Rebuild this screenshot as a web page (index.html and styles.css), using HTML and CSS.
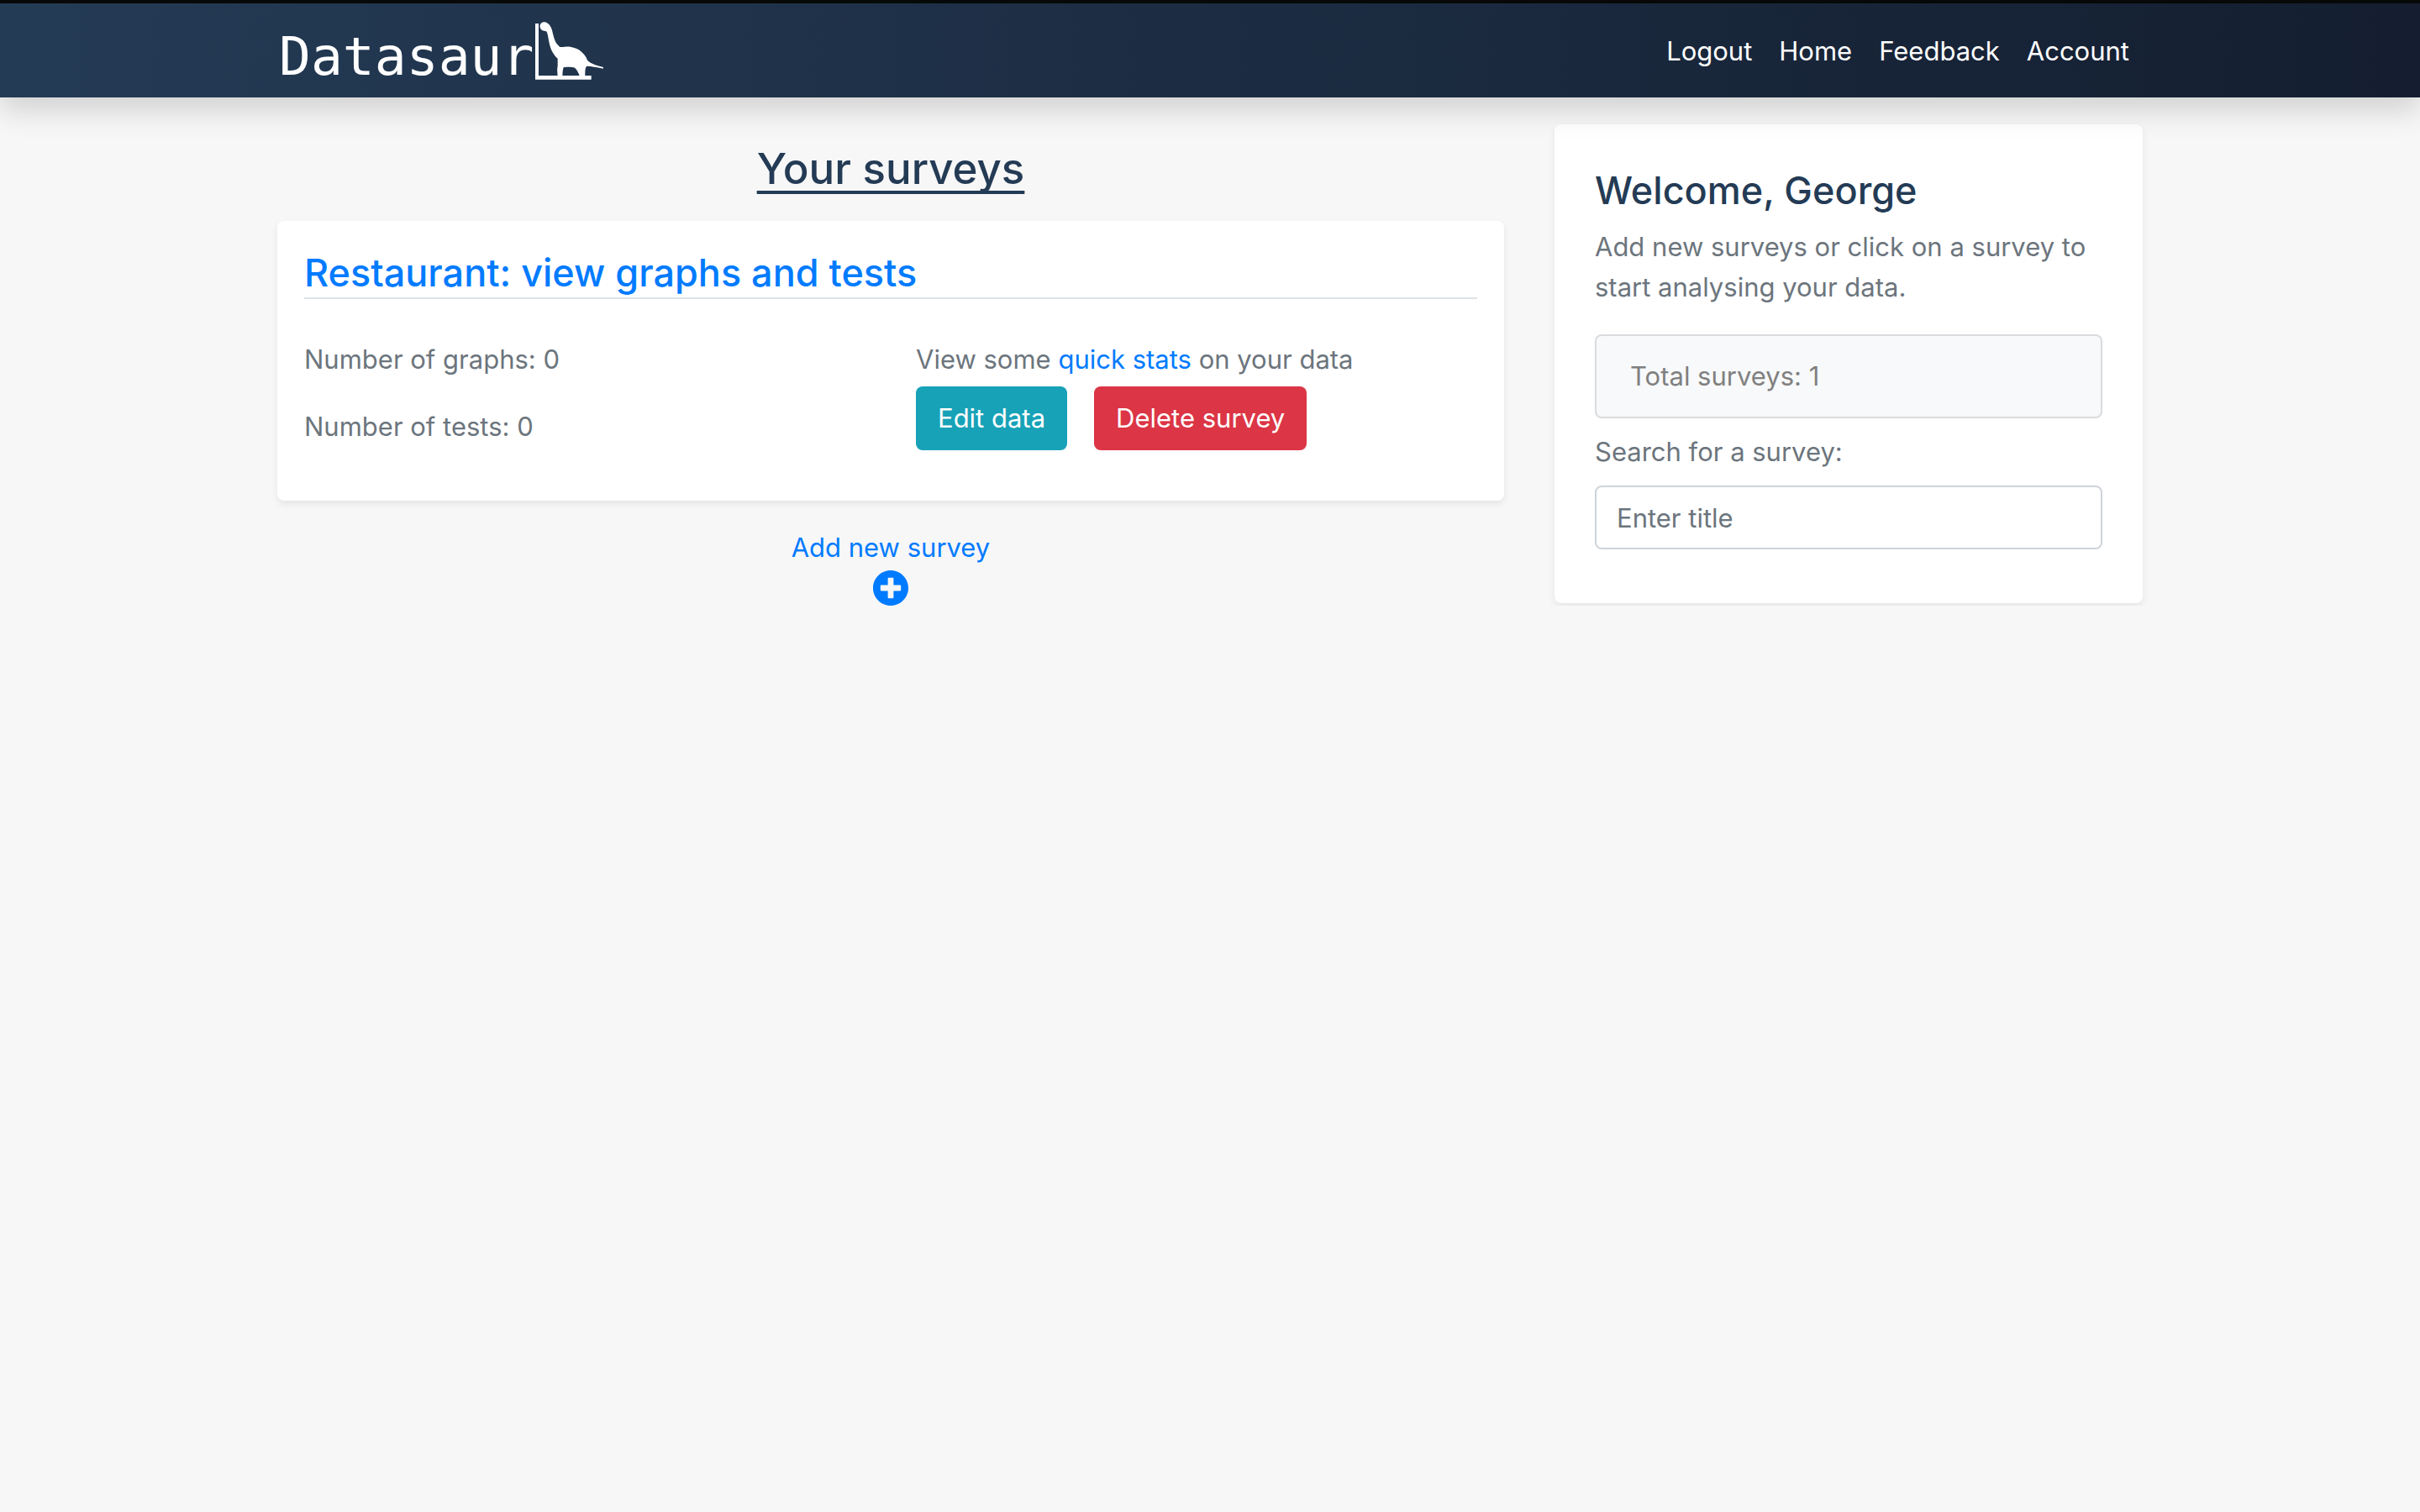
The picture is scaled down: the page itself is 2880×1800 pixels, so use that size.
FILE: index.html
```html
<!DOCTYPE html>
<html lang="en">
<head>
<meta charset="utf-8">
<meta name="viewport" content="width=device-width, initial-scale=1">
<title>Datasaur</title>
<link rel="stylesheet" href="styles.css">
</head>
<body>
<header class="navbar">
  <div class="navbar-inner">
    <a class="brand" href="#">
      <span class="brand-name">Datasaur</span>
      <svg class="brand-mark" viewBox="51 45 246 210" aria-hidden="true">
        <path d="M51 54H63V240H251V254H51Z"/>
        <path d="M68 67C66 55 75 47 86 49C98 52 107 63 111 78C116 98 120 120 133 132C138 138 142 139 148 138C172 133 200 140 216 155C226 164 233 172 236 183C242 193 262 203 294 210L293 215C270 210 250 206 236 206C229 210 229 222 229 240Q220 245 210 243C206 230 199 218 192 212C184 209 160 208 152 211C148 222 149 232 148 242Q140 246 131 242C130 226 128 216 131 206V179C115 165 106 145 102 128C98 112 97 95 92 83C87 79 71 83 68 67Z"/>
      </svg>
    </a>
    <nav class="nav-links">
      <a href="#">Logout</a>
      <a href="#">Home</a>
      <a href="#">Feedback</a>
      <a href="#">Account</a>
    </nav>
  </div>
</header>
<main class="container">
  <section class="surveys">
    <h1 class="page-title">Your surveys</h1>
    <article class="card survey">
      <h2 class="survey-title"><a href="#">Restaurant: view graphs and tests</a></h2>
      <div class="survey-body">
        <div class="counts">
          <p>Number of graphs: 0</p>
          <p>Number of tests: 0</p>
        </div>
        <div>
          <p>View some <a href="#">quick stats</a> on your data</p>
          <div class="actions">
            <button class="btn btn-info" type="button">Edit data</button>
            <button class="btn btn-danger" type="button">Delete survey</button>
          </div>
        </div>
      </div>
    </article>
    <a class="add-survey" href="#">
      <span>Add new survey</span>
      <svg class="plus" viewBox="8 8 496 496" aria-hidden="true"><path d="M256 8C119 8 8 119 8 256s111 248 248 248 248-111 248-248S393 8 256 8zm144 276c0 6.600-5.400 12-12 12h-92v92c0 6.600-5.400 12-12 12h-56c-6.600 0-12-5.400-12-12v-92h-92c-6.600 0-12-5.400-12-12v-56c0-6.600 5.400-12 12-12h92v-92c0-6.600 5.400-12 12-12h56c6.600 0 12 5.400 12 12v92h92c6.600 0 12 5.400 12 12v56z"/></svg>
    </a>
  </section>
  <aside class="sidebar">
    <div class="card welcome">
      <h2 class="welcome-title">Welcome, George</h2>
      <p>Add new surveys or click on a survey to start analysing your data.</p>
      <div class="total">Total surveys: 1</div>
      <form class="search">
        <label for="title">Search for a survey:</label>
        <input id="title" type="text" placeholder="Enter title">
      </form>
    </div>
  </aside>
</main>
</body>
</html>
```
FILE: styles.css
```css
* { box-sizing: border-box; }

body {
  margin: 0;
  background: #f7f7f7;
  color: #6c757d;
  font-family: Inter, "Liberation Sans", sans-serif;
  font-size: 31px;
  line-height: 48px;
}

h1, h2, p { margin: 0; }

h1, h2 { color: #243b55; font-weight: 500; }

a { color: #007bff; text-decoration: none; }

.navbar {
  position: relative;
  z-index: 1;
  border-top: 4px solid #070808;
  background: linear-gradient(to right, #243b55, #141e30);
  box-shadow: 0 16px 32px rgba(0, 0, 0, 0.15);
}

.navbar-inner {
  display: flex;
  align-items: center;
  justify-content: space-between;
  max-width: 2280px;
  height: 112px;
  margin: 0 auto;
  padding: 0 30px;
}

.brand {
  display: flex;
  align-items: center;
  padding-left: 2px;
  gap: 2px;
  color: #fff;
  font-family: "DejaVu Sans Mono", monospace;
  font-size: 63px;
  line-height: 80px;
}

.brand-name { padding-top: 16px; }

.brand-mark { width: 82px; height: 70px; fill: #fff; }

.nav-links { display: flex; gap: 32px; padding: 2px 16px 0 0; }

.nav-links a { color: #fff; }

.container {
  display: grid;
  grid-template-columns: 2fr 1fr;
  align-items: start;
  max-width: 2280px;
  margin: 0 auto;
  padding-top: 32px;
}

.surveys, .sidebar { padding: 0 30px; }

.page-title {
  padding: 19px 0 28px;
  font-size: 51px;
  line-height: 68px;
  text-align: center;
  text-decoration: underline;
  text-decoration-thickness: 4px;
  text-underline-offset: 8px;
  text-decoration-skip-ink: none;
}

.card {
  border-radius: 8px;
  background: #fff;
  box-shadow: 0 4px 8px rgba(0, 0, 0, 0.075);
}

.survey { padding: 33px 32px 32px; }

.survey-title {
  border-bottom: 2px solid #dee2e6;
  font-size: 45px;
  line-height: 58px;
}

.survey-body {
  display: grid;
  grid-template-columns: 1fr 1fr;
  gap: 60px;
  padding: 48px 0 28px;
}

.counts { display: grid; align-content: start; gap: 32px; }

.actions { display: flex; gap: 32px; padding-top: 8px; }

.btn {
  height: 76px;
  padding: 0 26px;
  border: 0;
  border-radius: 8px;
  color: #fff;
  font: inherit;
}

.btn-info { background: #17a2b8; }

.btn-danger { background: #dc3545; }

.add-survey {
  display: flex;
  flex-direction: column;
  align-items: center;
  gap: 3px;
  margin-top: 32px;
}

.plus { width: 42px; height: 42px; fill: #007bff; }

.welcome { padding: 48px 48px 64px; }

.welcome-title {
  padding: 2px 0 14px;
  font-size: 45px;
  line-height: 58px;
}

.total {
  margin: 32px 0 16px;
  padding: 24px 40px;
  border: 2px solid #d9dbde;
  border-radius: 8px;
  background: #f8f9fa;
  color: #808080;
}

.search { display: grid; gap: 16px; }

.search input {
  width: 100%;
  height: 76px;
  padding: 0 24px;
  border: 2px solid #ced4da;
  border-radius: 8px;
  background: #fff;
  color: #495057;
  font: inherit;
}

.search input::placeholder { color: #6c757d; opacity: 1; }
```
